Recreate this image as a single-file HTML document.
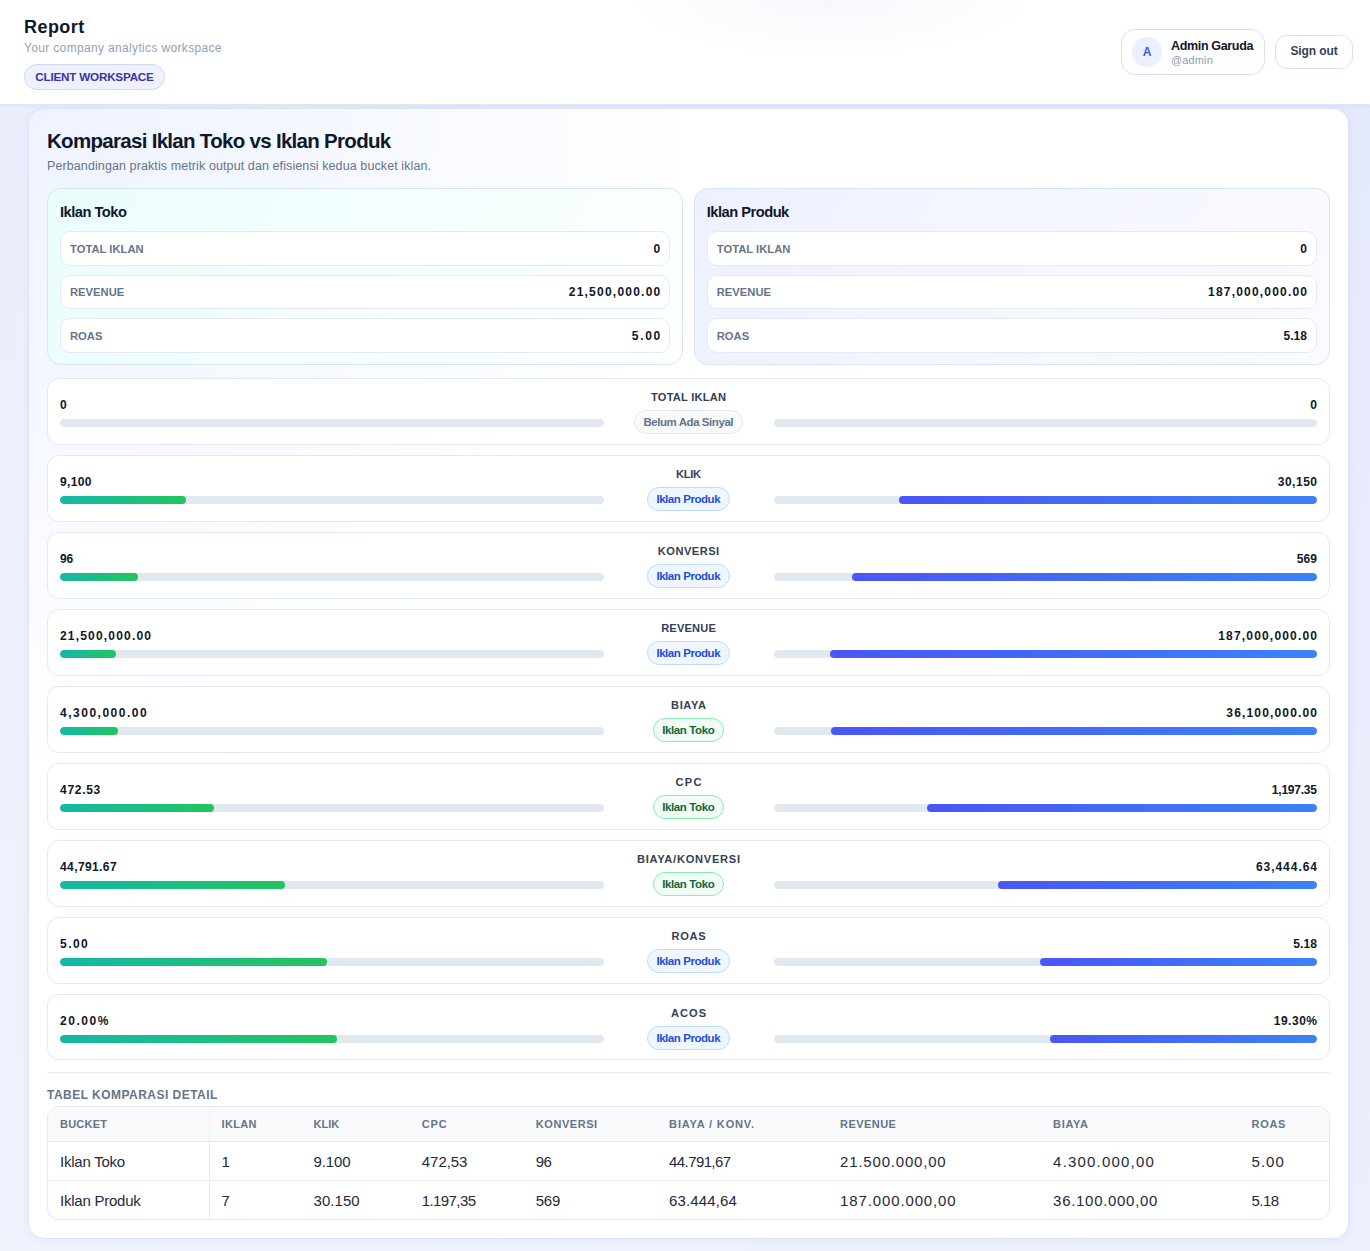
<!DOCTYPE html>
<html lang="id">
<head>
<meta charset="utf-8">
<title>Report</title>
<style>
*{box-sizing:border-box;margin:0;padding:0}
html,body{width:1370px;height:1251px;overflow:hidden}
body{font-family:"Liberation Sans",sans-serif;color:#0f172a;background:linear-gradient(90deg,rgba(255,255,255,.22) 0%,rgba(255,255,255,0) 100%),linear-gradient(180deg,#e5e9fc 8%,#ecf0fc 100%);position:relative}
/* ---------- header ---------- */
.top{z-index:3;position:absolute;left:0;top:0;width:1370px;height:105px;background:#fff;border-bottom:1px solid #dfe6f8;overflow:hidden}
.top .glow{position:absolute;left:620px;top:-60px;width:420px;height:120px;border-radius:50%;background:radial-gradient(closest-side,rgba(245,247,252,.9),rgba(255,255,255,0))}
.top h1{position:absolute;left:24px;top:15px;font-size:18px;line-height:24px;font-weight:700;color:#0f172a;letter-spacing:.45px;white-space:nowrap}
.top .sub{position:absolute;left:24px;top:39px;font-size:12px;line-height:18px;color:#93a1b7;letter-spacing:.34px;white-space:nowrap}
.chip{position:absolute;left:24px;top:64px;width:141px;height:26px;border:1px solid #d2d8fb;background:#eef1fe;border-radius:13px;font-size:11.7px;font-weight:700;line-height:24px;color:#3a33a6;letter-spacing:-.22px;white-space:nowrap;text-align:center}
.user{position:absolute;left:1121px;top:29px;width:144px;height:46px;border:1px solid #d7e1f6;border-radius:14px;background:#fff}
.user .av{position:absolute;left:10px;top:7px;width:30px;height:30px;border-radius:50%;background:#ebf0fe;color:#4257f5;font-weight:700;font-size:12px;line-height:30px;text-align:center}
.user .nm{position:absolute;left:49px;top:8px;font-size:12.5px;line-height:16px;font-weight:700;color:#0f172a;white-space:nowrap;letter-spacing:-.34px}
.user .hd{position:absolute;left:49px;top:23px;font-size:11px;line-height:14px;color:#8e9db4;white-space:nowrap;letter-spacing:.14px}
.so{position:absolute;left:1275px;top:35px;width:78px;height:34px;border:1px solid #d7e1f6;border-radius:12px;background:#fff;font-size:12px;font-weight:700;line-height:30px;text-align:center;color:#334155;letter-spacing:-.12px}
/* ---------- card ---------- */
.card{position:absolute;left:28px;top:108px;width:1321px;height:1131px;border:1px solid #dce4f6;border-radius:16px;background:radial-gradient(circle at 0 0,#eef3ff 0,#f2f6ff 180px,#f6f9ff 350px,#fbfcff 500px,#ffffff 680px);box-shadow:0 1px 8px rgba(80,100,200,.07);padding:18px}
.card h2{font-size:20.5px;line-height:28px;font-weight:700;color:#0f172a;letter-spacing:-.7px;white-space:nowrap;height:28px}
.card .desc{font-size:12.5px;line-height:18px;color:#64748b;letter-spacing:.1px;white-space:nowrap;height:18px;margin-top:2px}
.duo{display:flex;gap:10.5px;margin-top:13px}
.bucket{flex:1;height:177px;border:1px solid #d9e3f7;border-radius:14px;padding:12px}
.bucket.t{background:linear-gradient(120deg,#eafdfd 0%,#f3feff 40%,#fdffff 100%)}
.bucket.p{background:linear-gradient(120deg,#edf1ff 0%,#f4f6ff 45%,#fafbff 100%)}
.bucket h3{font-size:14.7px;line-height:22px;height:22px;font-weight:700;color:#0f172a;letter-spacing:-.51px}
.kv{display:flex;justify-content:space-between;align-items:center;height:34.5px;border:1px solid #e3e9f7;border-radius:10px;background:#fff;padding:0 9px;margin-top:9px}
.bucket h3 + .kv{margin-top:8.3px}
.kv span{font-size:11.2px;font-weight:700;color:#64748b;letter-spacing:.03px}
.kv b{font-size:12px;font-weight:700;color:#0f172a;white-space:nowrap}
/* ---------- metric rows ---------- */
.rows{margin-top:13.2px;display:flex;flex-direction:column;gap:10px}
.row{display:grid;grid-template-columns:1fr 170px 1fr;height:66.93px;border:1px solid #e1e8f8;border-radius:12px;background:#fff;padding:0 12px;position:relative;flex:none}
.side{padding-top:16.95px}
.side .v{font-size:12px;line-height:18px;height:18px;font-weight:700;color:#0f172a;white-space:nowrap}
.side .v span{display:inline-block}
.side.r .v{text-align:right}
.track{height:8px;border-radius:4px;background:#e2e8f0;margin-top:5px;position:relative;overflow:hidden}
.fill{position:absolute;top:0;bottom:0;border-radius:4px}
.side.l .fill{left:0;background:linear-gradient(90deg,#14b8a6,#22c55e)}
.side.r .fill{right:0;background:linear-gradient(90deg,#4a56f5,#3b82f6)}
.mid{text-align:center;padding-top:10px}
.mid .lb{font-size:11.1px;line-height:17.25px;height:17.25px;font-weight:700;color:#334155;white-space:nowrap}
.mid .lb span,.pill span{display:inline-block}
.pill{display:inline-block;height:23.7px;line-height:22.4px;padding:0 8.2px;border-radius:12px;border:1px solid;font-size:11.5px;font-weight:700;margin-top:4px;white-space:nowrap;vertical-align:top}
.pill.p{background:#eff6ff;border-color:#bfdbfe;color:#1d4ed8}
.pill.t{background:#f0fdf4;border-color:#86efac;color:#166534}
.pill.n{background:#f8fafc;border-color:#e2e8f0;color:#64748b}
/* ---------- table ---------- */
.sep{height:1px;background:#e6ebf5;margin-top:11.55px}
.tt{font-size:12px;line-height:18px;height:18px;font-weight:700;color:#64748b;letter-spacing:.47px;margin-top:13px;white-space:nowrap}
.tbl{margin-top:2px;border:1px solid #e1e8f6;border-radius:12px;overflow:hidden;background:#fff;height:114px}
table{border-collapse:collapse;width:100%;table-layout:fixed}
th{height:34.5px;background:#f8fafc;font-size:11px;font-weight:700;color:#64748b;text-align:left;padding:0 12px;border-bottom:1px solid #e1e8f6;white-space:nowrap}
td{height:39px;font-size:15px;color:#1e293b;padding:0 12px;border-top:1px solid #e9edf6;white-space:nowrap}
tr:first-child td{border-top:0}
td:first-child{border-right:1px solid #e6ebf6}
th:first-child{border-right:1px solid #eef2f9}
.band{z-index:2;position:absolute;left:0;top:105px;width:1370px;height:4px;background:linear-gradient(180deg,rgba(200,210,245,.35),rgba(200,210,245,0))}

</style>
</head>
<body>
<div class="top">
  <div class="glow"></div>
  <h1>Report</h1>
  <div class="sub">Your company analytics workspace</div>
  <div class="chip">CLIENT WORKSPACE</div>
  <div class="user"><div class="av">A</div><div class="nm">Admin Garuda</div><div class="hd">@admin</div></div>
  <div class="so">Sign out</div>
</div>
<div class="band"></div>
<div class="card">
  <h2>Komparasi Iklan Toko vs Iklan Produk</h2>
  <div class="desc">Perbandingan praktis metrik output dan efisiensi kedua bucket iklan.</div>
  <div class="duo">
    <div class="bucket t">
      <h3>Iklan Toko</h3>
      <div class="kv"><span>TOTAL IKLAN</span><b>0</b></div>
      <div class="kv"><span>REVENUE</span><b style="letter-spacing:1.23px;margin-right:-1.23px">21,500,000.00</b></div>
      <div class="kv"><span>ROAS</span><b style="letter-spacing:1.71px;margin-right:-1.71px">5.00</b></div>
    </div>
    <div class="bucket p">
      <h3>Iklan Produk</h3>
      <div class="kv"><span>TOTAL IKLAN</span><b>0</b></div>
      <div class="kv"><span>REVENUE</span><b style="letter-spacing:1.19px;margin-right:-1.19px">187,000,000.00</b></div>
      <div class="kv"><span>ROAS</span><b style="letter-spacing:0.04px;margin-right:-0.04px">5.18</b></div>
    </div>
  </div>
  <div class="rows">
    <div class="row"><div class="side l"><div class="v"><span>0</span></div><div class="track"></div></div><div class="mid"><div class="lb"><span style="letter-spacing:0.23px;margin-right:-0.23px">TOTAL IKLAN</span></div><span class="pill n"><span style="letter-spacing:-0.44px;margin-right:0.44px">Belum Ada Sinyal</span></span></div><div class="side r"><div class="v"><span>0</span></div><div class="track"></div></div></div>
    <div class="row"><div class="side l"><div class="v"><span style="letter-spacing:0.36px">9,100</span></div><div class="track"><div class="fill" style="width:23.18%"></div></div></div><div class="mid"><div class="lb"><span style="letter-spacing:-0.26px;margin-right:0.26px">KLIK</span></div><span class="pill p"><span style="letter-spacing:-0.44px;margin-right:0.44px">Iklan Produk</span></span></div><div class="side r"><div class="v"><span style="letter-spacing:0.51px;margin-right:-0.51px">30,150</span></div><div class="track"><div class="fill" style="width:76.82%"></div></div></div></div>
    <div class="row"><div class="side l"><div class="v"><span style="letter-spacing:-0.07px">96</span></div><div class="track"><div class="fill" style="width:14.44%"></div></div></div><div class="mid"><div class="lb"><span style="letter-spacing:0.49px;margin-right:-0.49px">KONVERSI</span></div><span class="pill p"><span style="letter-spacing:-0.44px;margin-right:0.44px">Iklan Produk</span></span></div><div class="side r"><div class="v"><span style="letter-spacing:0.13px;margin-right:-0.13px">569</span></div><div class="track"><div class="fill" style="width:85.56%"></div></div></div></div>
    <div class="row"><div class="side l"><div class="v"><span style="letter-spacing:1.19px">21,500,000.00</span></div><div class="track"><div class="fill" style="width:10.31%"></div></div></div><div class="mid"><div class="lb"><span style="letter-spacing:0.18px;margin-right:-0.18px">REVENUE</span></div><span class="pill p"><span style="letter-spacing:-0.44px;margin-right:0.44px">Iklan Produk</span></span></div><div class="side r"><div class="v"><span style="letter-spacing:1.18px;margin-right:-1.18px">187,000,000.00</span></div><div class="track"><div class="fill" style="width:89.69%"></div></div></div></div>
    <div class="row"><div class="side l"><div class="v"><span style="letter-spacing:1.51px">4,300,000.00</span></div><div class="track"><div class="fill" style="width:10.64%"></div></div></div><div class="mid"><div class="lb"><span style="letter-spacing:0.63px;margin-right:-0.63px">BIAYA</span></div><span class="pill t"><span style="letter-spacing:-0.38px;margin-right:0.38px">Iklan Toko</span></span></div><div class="side r"><div class="v"><span style="letter-spacing:1.16px;margin-right:-1.16px">36,100,000.00</span></div><div class="track"><div class="fill" style="width:89.36%"></div></div></div></div>
    <div class="row"><div class="side l"><div class="v"><span style="letter-spacing:0.71px">472.53</span></div><div class="track"><div class="fill" style="width:28.3%"></div></div></div><div class="mid"><div class="lb"><span style="letter-spacing:1.19px;margin-right:-1.19px">CPC</span></div><span class="pill t"><span style="letter-spacing:-0.38px;margin-right:0.38px">Iklan Toko</span></span></div><div class="side r"><div class="v"><span style="letter-spacing:-0.22px;margin-right:0.22px">1,197.35</span></div><div class="track"><div class="fill" style="width:71.7%"></div></div></div></div>
    <div class="row"><div class="side l"><div class="v"><span style="letter-spacing:0.4px">44,791.67</span></div><div class="track"><div class="fill" style="width:41.38%"></div></div></div><div class="mid"><div class="lb"><span style="letter-spacing:0.74px;margin-right:-0.74px">BIAYA/KONVERSI</span></div><span class="pill t"><span style="letter-spacing:-0.38px;margin-right:0.38px">Iklan Toko</span></span></div><div class="side r"><div class="v"><span style="letter-spacing:0.96px;margin-right:-0.96px">63,444.64</span></div><div class="track"><div class="fill" style="width:58.62%"></div></div></div></div>
    <div class="row"><div class="side l"><div class="v"><span style="letter-spacing:1.47px">5.00</span></div><div class="track"><div class="fill" style="width:49.12%"></div></div></div><div class="mid"><div class="lb"><span style="letter-spacing:0.68px;margin-right:-0.68px">ROAS</span></div><span class="pill p"><span style="letter-spacing:-0.44px;margin-right:0.44px">Iklan Produk</span></span></div><div class="side r"><div class="v"><span style="letter-spacing:0.11px;margin-right:-0.11px">5.18</span></div><div class="track"><div class="fill" style="width:50.88%"></div></div></div></div>
    <div class="row"><div class="side l"><div class="v"><span style="letter-spacing:1.53px">20.00%</span></div><div class="track"><div class="fill" style="width:50.89%"></div></div></div><div class="mid"><div class="lb"><span style="letter-spacing:1.02px;margin-right:-1.02px">ACOS</span></div><span class="pill p"><span style="letter-spacing:-0.44px;margin-right:0.44px">Iklan Produk</span></span></div><div class="side r"><div class="v"><span style="letter-spacing:0.51px;margin-right:-0.51px">19.30%</span></div><div class="track"><div class="fill" style="width:49.11%"></div></div></div></div>
  </div>
  <div class="sep"></div>
  <div class="tt">TABEL KOMPARASI DETAIL</div>
  <div class="tbl">
    <table>
      <colgroup><col style="width:161px"><col style="width:92.5px"><col style="width:108.3px"><col style="width:114px"><col style="width:133.3px"><col style="width:171px"><col style="width:213px"><col style="width:198.5px"><col></colgroup>
      <thead><tr><th><span style="letter-spacing:0.24px">BUCKET</span></th><th><span style="letter-spacing:0.36px">IKLAN</span></th><th><span style="letter-spacing:0.03px">KLIK</span></th><th><span style="letter-spacing:0.81px">CPC</span></th><th><span style="letter-spacing:0.56px">KONVERSI</span></th><th><span style="letter-spacing:0.85px">BIAYA / KONV.</span></th><th><span style="letter-spacing:0.43px">REVENUE</span></th><th><span style="letter-spacing:0.68px">BIAYA</span></th><th><span style="letter-spacing:0.65px">ROAS</span></th></tr></thead>
      <tbody>
        <tr><td><span style="letter-spacing:-0.24px">Iklan Toko</span></td><td><span>1</span></td><td><span style="letter-spacing:-0.1px">9.100</span></td><td><span style="letter-spacing:-0.05px">472,53</span></td><td><span style="letter-spacing:-0.6px">96</span></td><td><span style="letter-spacing:-0.6px">44.791,67</span></td><td><span style="letter-spacing:0.8px">21.500.000,00</span></td><td><span style="letter-spacing:1.19px">4.300.000,00</span></td><td><span style="letter-spacing:0.98px">5.00</span></td></tr>
        <tr><td><span style="letter-spacing:-0.23px">Iklan Produk</span></td><td><span>7</span></td><td><span style="letter-spacing:0.05px">30.150</span></td><td><span style="letter-spacing:-0.6px">1.197,35</span></td><td><span style="letter-spacing:-0.29px">569</span></td><td><span style="letter-spacing:0.13px">63.444,64</span></td><td><span style="letter-spacing:0.87px">187.000.000,00</span></td><td><span style="letter-spacing:0.7px">36.100.000,00</span></td><td><span style="letter-spacing:-0.6px">5.18</span></td></tr>
      </tbody>
    </table>
  </div>
</div>
</body>
</html>
